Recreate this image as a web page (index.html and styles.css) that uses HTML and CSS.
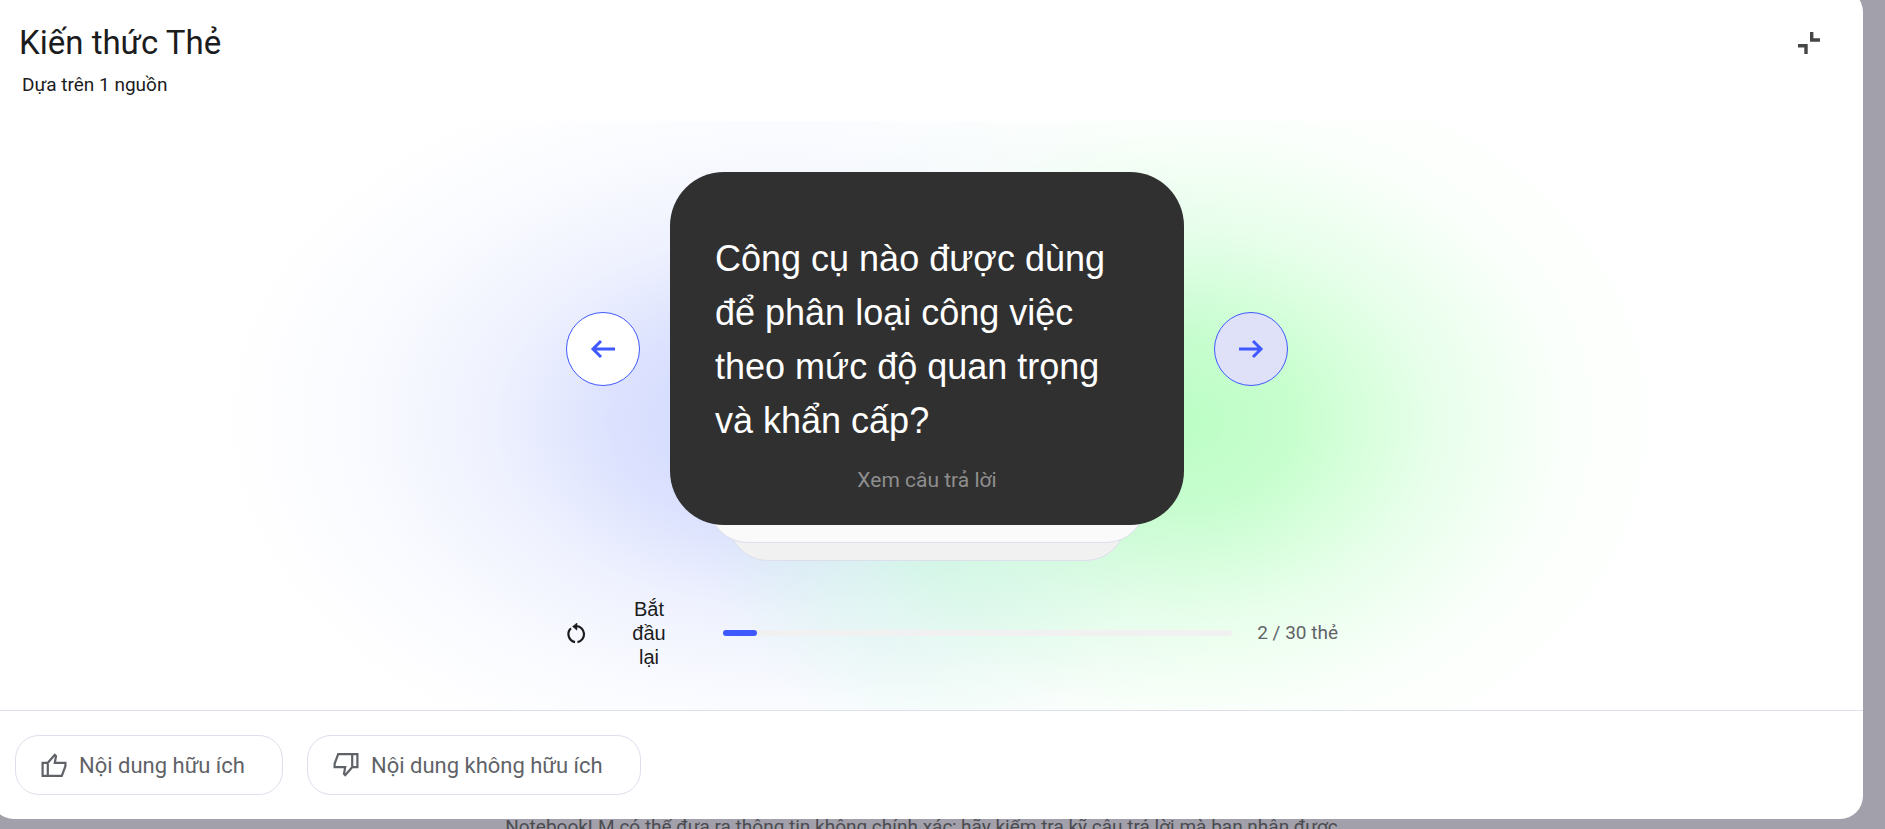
FILE: index.html
```html
<!DOCTYPE html>
<html lang="vi">
<head>
    <meta charset="UTF-8" />
    <meta name="viewport" content="width=device-width, initial-scale=1.0" />
    <title>Kiến thức Thẻ</title>
    <link rel="stylesheet" href="styles.css">
</head>
<body>
    <main class="dialog">
        <header class="dialog-header">
            <div>
                <h1>Kiến thức Thẻ</h1>
                <p class="sources">Dựa trên 1 nguồn</p>
            </div>
            <button class="collapse" aria-label="Thu gọn">
                <svg width="22" height="22" viewBox="0 0 22 22" fill="none" stroke="#444746" stroke-width="3.400">
                    <path d="M13.700 0v8H22M0 13.700h8V22" />
                </svg>
            </button>
        </header>

        <section class="stage">
            <div class="viewer">
                <div class="deck">
                    <button class="nav" aria-label="Thẻ trước">
                        <svg width="26" height="20" viewBox="0 0 26 20" fill="none" stroke="#4059ff" stroke-width="3">
                            <path d="M25 10H3M11 2L3 10l8 8" />
                        </svg>
                    </button>
                    <div class="stack">
                        <article class="card">
                            <p class="question">Công cụ nào được dùng để phân loại công việc theo mức độ quan trọng và khẩn cấp?</p>
                            <button class="answer">Xem câu trả lời</button>
                        </article>
                    </div>
                    <button class="nav active" aria-label="Thẻ tiếp theo">
                        <svg width="26" height="20" viewBox="0 0 26 20" fill="none" stroke="#4059ff" stroke-width="3">
                            <path d="M1 10h22M15 2l8 8-8 8" />
                        </svg>
                    </button>
                </div>

                <div class="controls">
                    <button class="restart">
                        <svg width="22" height="24" viewBox="0 0 22 24" fill="none" stroke="#1b1c1d" stroke-width="2.200">
                            <path d="M11.500 21.200a8.200 8.200 0 0 0-1-16.200M5 7.200a8.200 8.200 0 0 0 4 14" />
                            <path d="M11 2L6.500 5.600l4.500 3.600z" fill="#1b1c1d" stroke-width="0.500" />
                        </svg>
                        <span>Bắt đầu lại</span>
                    </button>
                    <div class="progress" role="progressbar" aria-valuemin="0" aria-valuemax="30" aria-valuenow="2">
                        <div class="progress-fill" style="width: 6.667%"></div>
                    </div>
                    <span class="count">2 / 30 thẻ</span>
                </div>
            </div>
        </section>

        <footer class="feedback">
            <button class="chip">
                <svg width="26" height="26" viewBox="0 0 26 26" fill="none" stroke="#5f6368" stroke-width="2.200">
                    <path d="M1.600 10.800h5.200l7-8 1.200 1.200-1.200 6.800h10.600v3.400L20.800 23.800H1.600zM6.800 10.800v13" />
                </svg>
                Nội dung hữu ích
            </button>
            <button class="chip">
                <svg width="26" height="26" viewBox="0 0 26 26" fill="none" stroke="#5f6368" stroke-width="2.200">
                    <path d="M24.400 15.200h-5.200l-7 8-1.200-1.200 1.200-6.800H1.600v-3.400L5.200 2.200h19.200zM19.200 15.200v-13" />
                </svg>
                Nội dung không hữu ích
            </button>
        </footer>
    </main>
    <p class="disclaimer">NotebookLM có thể đưa ra thông tin không chính xác; hãy kiểm tra kỹ câu trả lời mà bạn nhận được.</p>
</body>
</html>
```

FILE: styles.css
```css
* {
    margin: 0;
    padding: 0;
    box-sizing: border-box;
}

body {
    height: 100vh;
    overflow: hidden;
    background: #a2a1ab;
    font-family: Roboto, "Liberation Sans", sans-serif;
    color: #1b1c1d;
}

button {
    border: none;
    background: none;
    font: inherit;
    color: inherit;
    cursor: pointer;
}

svg {
    display: block;
    flex-shrink: 0;
}

.dialog {
    position: relative;
    z-index: 1;
    margin: -11px 22px 0 -9px;
    border-radius: 23px;
    background: #fff;
    overflow: hidden;
}

.dialog-header {
    display: flex;
    justify-content: space-between;
    align-items: flex-start;
    height: 132px;
    padding: 32px 32px 0 28px;
}

h1 {
    font-size: 33px;
    line-height: 44px;
    font-weight: 400;
}

.sources {
    margin: 8px 0 0 3px;
    font-size: 19px;
    line-height: 24px;
}

.collapse {
    padding: 11px;
}

.stage {
    padding: 51px 0 41px;
    background:
        radial-gradient(ellipse 500px 390px at 64% 51%, rgba(165, 255, 175, 0.72), rgba(165, 255, 175, 0.6) 22%, rgba(180, 255, 190, 0.3) 50%, rgba(200, 255, 205, 0.08) 76%, rgba(255, 255, 255, 0)),
        radial-gradient(ellipse 220px 200px at 50% 72%, rgba(200, 250, 225, 0.5), rgba(200, 250, 225, 0)),
        radial-gradient(ellipse 560px 370px at 42% 51%, #ced7fd, #dbe1fe 28%, #eff2fe 52%, #fafbff 76%, #fff);
}

.viewer {
    width: 722px;
    max-width: 100%;
    margin: 0 auto;
}

.deck {
    display: flex;
    align-items: center;
    gap: 30px;
}

.nav {
    display: flex;
    flex-shrink: 0;
    align-items: center;
    justify-content: center;
    width: 74px;
    height: 74px;
    border: 1px solid #4059ff;
    border-radius: 50%;
    background: #fff;
}

.nav.active {
    background: #dfe1f9;
}

.stack {
    position: relative;
    z-index: 0;
    flex: 1;
}

/* cards lying under the current one */
.stack::before,
.stack::after {
    content: "";
    position: absolute;
    z-index: -1;
    height: 100px;
    border: 1px solid #dddfec;
    border-radius: 40px;
}

.stack::before {
    left: 58px;
    right: 58px;
    bottom: -36px;
    background: #f1f1f1;
}

.stack::after {
    left: 38px;
    right: 38px;
    bottom: -18px;
    background: #fafafa;
}

.card {
    display: flex;
    flex-direction: column;
    align-items: center;
    padding: 60px 45px 33px;
    border-radius: 54px;
    background: #303030;
}

.question {
    align-self: stretch;
    font-family: "Liberation Sans", Arial, sans-serif;
    font-size: 36px;
    line-height: 54px;
    color: #fff;
}

.answer {
    margin-top: 20px;
    font-size: 21px;
    line-height: 24px;
    color: #8e8e8e;
}

.controls {
    display: flex;
    align-items: center;
    gap: 25px;
    margin: 72px -50px 0 0;
}

.restart {
    display: flex;
    align-items: center;
    gap: 36px;
    width: 132px;
    font-family: "Liberation Sans", Arial, sans-serif;
    font-size: 20px;
    line-height: 24px;
}

.restart span {
    width: 50px;
}

.progress {
    flex: 1;
    height: 6px;
    border-radius: 3px;
    background: #f1f1f1;
}

.progress-fill {
    height: 100%;
    border-radius: 3px;
    background: #4059ff;
}

.count {
    font-size: 19px;
    line-height: 24px;
    color: #5f6368;
    white-space: nowrap;
}

.feedback {
    display: flex;
    gap: 24px;
    padding: 24px;
    border-top: 1px solid #dddfec;
}

.chip {
    display: flex;
    align-items: center;
    gap: 12px;
    height: 60px;
    padding: 0 37px 0 25px;
    border: 1px solid #dddfec;
    border-radius: 24px;
    font-size: 22px;
    color: #5f6368;
}

.disclaimer {
    margin: -4px 37px 0 0;
    text-align: center;
    font-size: 19px;
    line-height: 24px;
    color: #4b4b50;
}
```
